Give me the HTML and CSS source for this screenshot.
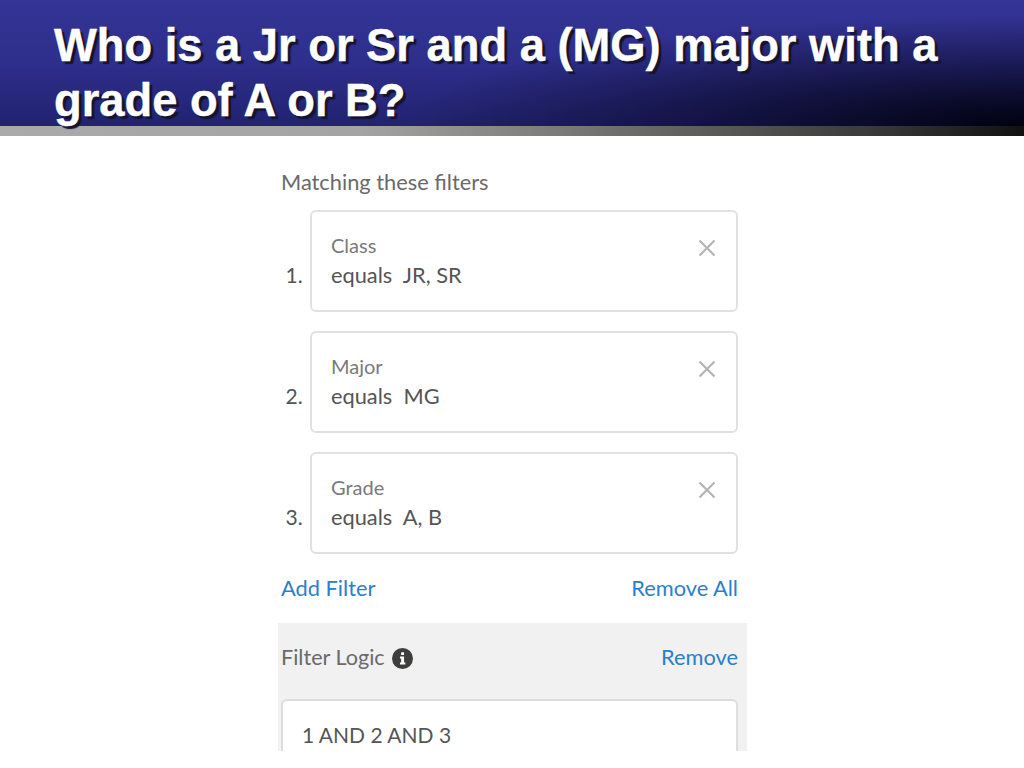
FILE: index.html
```html
<!DOCTYPE html>
<html lang="en">
<head>
  <meta charset="UTF-8">
  <meta name="viewport" content="width=device-width, initial-scale=1.0">
  <title>Who is a Jr or Sr</title>
  <link rel="stylesheet" href="styles.css">
</head>
<body>
  <header class="slide-header">
    <h1>Who is a Jr or Sr and a (MG) major with a grade of A or B?</h1>
  </header>
  <div class="slide-rule"></div>

  <main class="filter-panel">
    <h2 class="panel-title">Matching these filters</h2>

    <div class="filter-row">
      <span class="filter-num">1.</span>
      <div class="filter-card">
        <div class="filter-text">
          <span class="filter-field">Class</span>
          <span class="filter-value">equals&nbsp; JR, SR</span>
        </div>
        <svg class="filter-close" viewBox="0 0 18 18"><path d="M1.5 1.5 16.5 16.5M16.5 1.5 1.5 16.5"/></svg>
      </div>
    </div>

    <div class="filter-row">
      <span class="filter-num">2.</span>
      <div class="filter-card">
        <div class="filter-text">
          <span class="filter-field">Major</span>
          <span class="filter-value">equals&nbsp; MG</span>
        </div>
        <svg class="filter-close" viewBox="0 0 18 18"><path d="M1.5 1.5 16.5 16.5M16.5 1.5 1.5 16.5"/></svg>
      </div>
    </div>

    <div class="filter-row">
      <span class="filter-num">3.</span>
      <div class="filter-card">
        <div class="filter-text">
          <span class="filter-field">Grade</span>
          <span class="filter-value">equals&nbsp; A, B</span>
        </div>
        <svg class="filter-close" viewBox="0 0 18 18"><path d="M1.5 1.5 16.5 16.5M16.5 1.5 1.5 16.5"/></svg>
      </div>
    </div>

    <div class="filter-actions">
      <a class="link">Add Filter</a>
      <a class="link">Remove All</a>
    </div>

    <section class="logic">
      <div class="logic-head">
        <span class="logic-title">Filter Logic
          <svg class="info-icon" viewBox="0 0 20 20">
            <circle cx="10" cy="10" r="10" fill="#3e3e3c"/>
            <rect x="8.7" y="4" width="2.8" height="2.6" rx="0.5" fill="#fff"/>
            <path d="M7.6 8.2h3.9v5.6h1.2v1.9H7.6v-1.9h1.1v-3.7H7.6z" fill="#fff"/>
          </svg>
        </span>
        <a class="link">Remove</a>
      </div>
      <div class="logic-input">1 AND 2 AND 3</div>
    </section>
  </main>
</body>
</html>
```

FILE: styles.css
```css
html, body {
  margin: 0;
  background: #fff;
}

body {
  font-family: "Lato", "Open Sans", sans-serif;
  height: 768px;
  overflow: hidden;
}

.slide-header {
  height: 126px;
  box-sizing: border-box;
  padding: 18px 40px 0 54px;
  background:
    radial-gradient(ellipse 620px 110px at 100% 100%, rgba(0, 0, 12, 0.95), rgba(0, 0, 20, 0) 100%),
    linear-gradient(180deg, #343497 0%, #2e2e8c 50%, #222270 100%);
}

.slide-header h1 {
  margin: 0;
  font-family: "Liberation Sans", Arial, sans-serif;
  font-size: 45.3px;
  line-height: 55px;
  font-weight: bold;
  color: #fff;
  -webkit-text-stroke: 0.4px #fff;
  text-shadow: 3px 3px 1px #14142e;
}

.slide-rule {
  height: 10px;
  background: linear-gradient(90deg, #aaaaaa 0%, #a4a4a4 35%, #7a7a78 55%, #3a3a3a 85%, #111 100%);
}

.filter-panel {
  width: 469px;
  height: 615px;
  margin-left: 278px;
  overflow: hidden;
}

.panel-title {
  margin: 34px 0 16px 3px;
  font-size: 21.8px;
  line-height: 24px;
  font-weight: 400;
  color: #6a6a6a;
}

.filter-row {
  display: flex;
  align-items: flex-end;
  margin-bottom: 19px;
}

.filter-num {
  width: 32px;
  box-sizing: border-box;
  padding: 0 0 25px 7.5px;
  font-size: 21px;
  line-height: 24px;
  color: #555;
}

.filter-card {
  width: 428px;
  height: 102px;
  box-sizing: border-box;
  display: flex;
  justify-content: space-between;
  align-items: flex-start;
  padding: 21px 20px 0 19px;
  border: 2px solid #e1e1e1;
  border-radius: 6px;
  background: #fff;
}

.filter-text {
  display: flex;
  flex-direction: column;
  gap: 6px;
}

.filter-field {
  font-size: 20px;
  line-height: 24px;
  color: #7a7a7a;
}

.filter-value {
  font-size: 21.8px;
  line-height: 24px;
  color: #555;
}

.filter-close {
  width: 18px;
  height: 18px;
  margin-top: 6px;
  fill: none;
  stroke: #b4b4b4;
  stroke-width: 2.2;
}

.filter-actions {
  display: flex;
  justify-content: space-between;
  margin: 22px 9px 23px 3px;
}

.link {
  font-size: 21.8px;
  line-height: 24px;
  color: #2a80cc;
}

.logic {
  height: 128px;
  box-sizing: border-box;
  padding: 22px 9px 0 3px;
  background: #f1f1f2;
  overflow: hidden;
}

.logic-head {
  display: flex;
  justify-content: space-between;
  align-items: center;
  height: 24px;
}

.logic-title {
  display: flex;
  align-items: center;
  gap: 7px;
  font-size: 21.6px;
  line-height: 24px;
  color: #6a6a6a;
}

.info-icon {
  width: 21px;
  height: 21px;
  margin-top: 3px;
}

.logic-input {
  height: 70px;
  box-sizing: border-box;
  margin-top: 30px;
  padding: 22px 0 0 19px;
  border: 2px solid #dedede;
  border-bottom: 0;
  border-radius: 6px 6px 0 0;
  background: #fff;
  font-size: 21px;
  line-height: 24px;
  color: #555;
}
```
